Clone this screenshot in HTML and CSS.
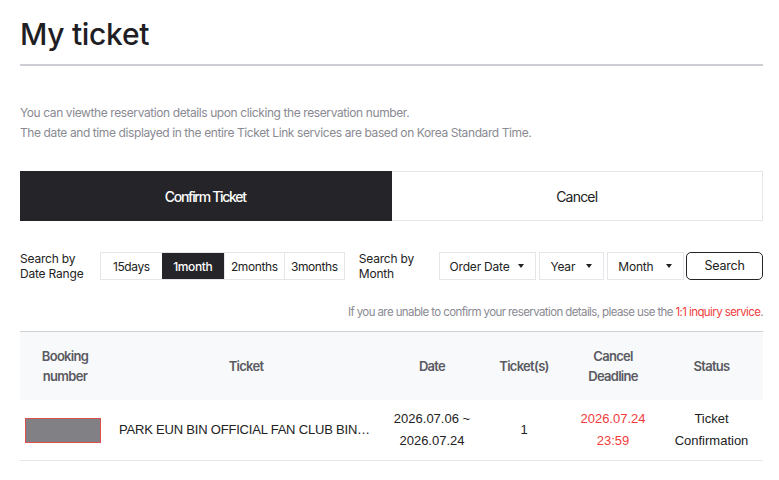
FILE: index.html
```html
<!DOCTYPE html>
<html lang="en">
<head>
    <meta charset="UTF-8">
    <meta name="viewport" content="width=device-width, initial-scale=1.0">
    <title>My ticket</title>
    <link rel="stylesheet" href="styles.css">
</head>
<body>
    <div class="page">
        <h1 class="page-title">My ticket</h1>

        <div class="notice">
            <p>You can viewthe reservation details upon clicking the reservation number.</p>
            <p>The date and time displayed in the entire Ticket Link services are based on Korea Standard Time.</p>
        </div>

        <div class="tabs">
            <a class="tab active">Confirm Ticket</a>
            <a class="tab">Cancel</a>
        </div>

        <div class="filter">
            <span class="filter-label">Search by<br>Date Range</span>
            <div class="range-group">
                <button class="range-btn">15days</button>
                <button class="range-btn active">1month</button>
                <button class="range-btn">2months</button>
                <button class="range-btn">3months</button>
            </div>
            <span class="filter-label month-label">Search by<br>Month</span>
            <div class="select order">Order Date<span class="caret"></span></div>
            <div class="select year">Year<span class="caret"></span></div>
            <div class="select month">Month<span class="caret"></span></div>
            <button class="search-btn">Search</button>
        </div>

        <p class="help">If you are unable to confirm your reservation details, please use the <a class="help-link">1:1 inquiry service</a>.</p>

        <table class="tickets">
            <thead>
                <tr>
                    <th class="col-no">Booking<br>number</th>
                    <th class="col-ticket">Ticket</th>
                    <th class="col-date">Date</th>
                    <th class="col-count">Ticket(s)</th>
                    <th class="col-deadline">Cancel<br>Deadline</th>
                    <th class="col-status">Status</th>
                </tr>
            </thead>
            <tbody>
                <tr>
                    <td><span class="masked"></span></td>
                    <td class="title-cell"><div class="ellipsis">PARK EUN BIN OFFICIAL FAN CLUB BINGO 2ND MEMBERSHIP</div></td>
                    <td>2026.07.06 ~<br>2026.07.24</td>
                    <td>1</td>
                    <td class="deadline">2026.07.24<br>23:59</td>
                    <td>Ticket<br>Confirmation</td>
                </tr>
            </tbody>
        </table>
    </div>
</body>
</html>
```

FILE: styles.css
```css
body {
    margin: 0;
    font-family: Inter, "Noto Sans", sans-serif;
    color: #222;
    background: #fff;
}
.page {
    width: 743px;
    margin-left: 20px;
}
.page-title {
    margin: 0;
    padding-top: 16px;
    height: 48px;
    font-size: 30px;
    font-weight: 500;
    line-height: 36px;
    letter-spacing: -0.3px;
    color: #1f1e24;
    border-bottom: 2px solid #cfcdd6;
}
.notice {
    margin-top: 37px;
    font-size: 12px;
    line-height: 20px;
    color: #8a8a92;
    letter-spacing: -0.4px;
}
.notice p {
    margin: 0;
}
.tabs {
    display: flex;
    margin-top: 28px;
    height: 50px;
}
.tab {
    flex: 1;
    display: flex;
    align-items: center;
    justify-content: center;
    font-size: 14px;
    letter-spacing: -0.8px;
    color: #222;
    border: 1px solid #e6e6ea;
    border-left: none;
}
.tab.active {
    background: #252429;
    color: #fff;
    font-weight: 500;
    letter-spacing: -1.3px;
    border-color: #252429;
}
.filter {
    display: flex;
    align-items: center;
    margin-top: 30px;
    height: 30px;
}
.filter-label {
    font-size: 12px;
    line-height: 15px;
    color: #222;
    width: 80px;
    letter-spacing: -0.2px;
}
.month-label {
    margin-left: 14px;
}
.range-group {
    display: flex;
    border: 1px solid #e6e6ea;
    height: 26px;
}
.range-btn {
    border: none;
    border-left: 1px solid #e6e6ea;
    background: #fff;
    font-family: inherit;
    font-size: 12px;
    letter-spacing: -0.4px;
    color: #222;
    padding: 0;
    width: 60px;
}
.range-btn:first-child {
    border-left: none;
    width: 61px;
}
.range-btn.active {
    background: #252429;
    color: #fff;
    font-weight: 500;
    width: 62px;
    border-left: none;
}
.select {
    display: flex;
    align-items: center;
    justify-content: space-between;
    box-sizing: border-box;
    height: 28px;
    padding: 0 11px 0 10px;
    border: 1px solid #e6e6ea;
    font-size: 12px;
    letter-spacing: -0.2px;
    color: #222;
    margin-right: 3px;
}
.select.order {
    width: 98px;
}
.select.year {
    width: 65px;
}
.select.month {
    width: 77px;
    margin-right: 2px;
}
.caret {
    width: 0;
    height: 0;
    border-left: 3px solid transparent;
    border-right: 3px solid transparent;
    border-top: 4px solid #222;
}
.search-btn {
    width: 77px;
    height: 28px;
    box-sizing: border-box;
    border: 1px solid #252429;
    border-radius: 5px;
    background: #fff;
    font-family: inherit;
    font-size: 12.5px;
    letter-spacing: -0.2px;
    color: #222;
    padding: 0 0 2px;
}
.help {
    margin: 21px 0 0;
    text-align: right;
    font-size: 11.5px;
    color: #8a8a92;
    letter-spacing: -0.6px;
    line-height: 20px;
}
.help-link {
    color: #f03c3c;
}
.tickets {
    width: 100%;
    margin-top: 9px;
    border-collapse: collapse;
    table-layout: fixed;
}
.tickets thead th {
    height: 68px;
    padding: 0;
    background: #f8f9fa;
    border-top: 1px solid #d0d0d6;
    font-size: 13px;
    font-weight: 600;
    line-height: 20px;
    color: #5a5a62;
    letter-spacing: -0.7px;
}
.col-no { width: 90px; }
.col-ticket { width: 272px; }
.col-date { width: 100px; }
.col-count { width: 84px; }
.col-deadline { width: 94px; }
.tickets td {
    height: 60px;
    padding: 0;
    text-align: center;
    font-family: "Liberation Sans", Arial, sans-serif;
    font-size: 13px;
    line-height: 22px;
    color: #222;
    border-bottom: 1px solid #e6e6ea;
}
.tickets .title-cell {
    text-align: left;
    padding-left: 9px;
    padding-right: 5px;
    letter-spacing: -0.2px;
}
.ellipsis {
    white-space: nowrap;
    overflow: hidden;
    text-overflow: ellipsis;
}
.tickets .deadline {
    color: #f03c3c;
}
.masked {
    display: block;
    box-sizing: border-box;
    margin-left: 5px;
    width: 76px;
    height: 25px;
    background: #818185;
    border: 1px solid #dc4f4f;
}
```
